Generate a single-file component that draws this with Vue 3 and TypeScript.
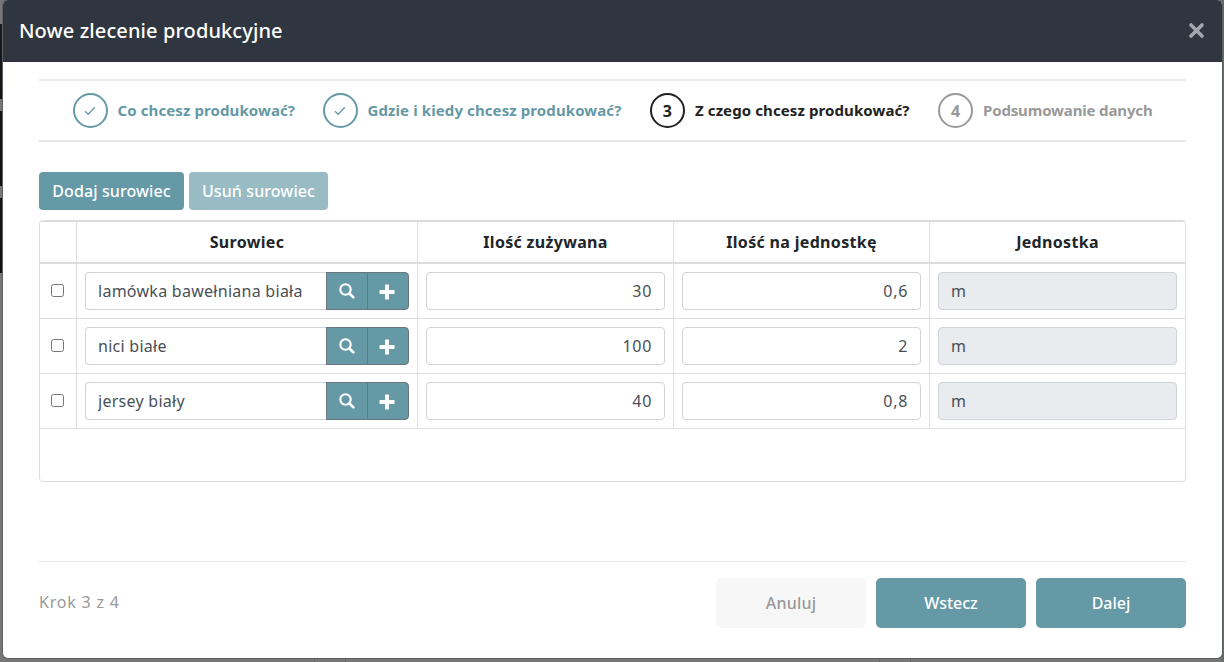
<script setup lang="ts">
import { ref } from 'vue'

interface Step {
  label: string
  state: 'done' | 'active' | 'todo'
}

interface Material {
  name: string
  used: string
  perUnit: string
  unit: string
  selected: boolean
}

const steps: Step[] = [
  { label: 'Co chcesz produkować?', state: 'done' },
  { label: 'Gdzie i kiedy chcesz produkować?', state: 'done' },
  { label: 'Z czego chcesz produkować?', state: 'active' },
  { label: 'Podsumowanie danych', state: 'todo' },
]

const materials = ref<Material[]>([
  { name: 'lamówka bawełniana biała', used: '30', perUnit: '0,6', unit: 'm', selected: false },
  { name: 'nici białe', used: '100', perUnit: '2', unit: 'm', selected: false },
  { name: 'jersey biały', used: '40', perUnit: '0,8', unit: 'm', selected: false },
])
</script>

<template>
  <div class="backdrop">
    <section class="modal">
      <header class="header">
        <h1 class="title">Nowe zlecenie produkcyjne</h1>
        <button class="close" aria-label="Zamknij">
          <svg width="17" height="17" viewBox="0 0 17 17"><path d="M3 3L14 14M14 3L3 14" fill="none" stroke="#a4a7ab" stroke-width="3.6" stroke-linecap="round" /></svg>
        </button>
      </header>

      <div class="body">
        <ol class="steps">
          <li v-for="(step, i) in steps" :key="step.label" class="step" :class="step.state">
            <span class="circle">
              <svg v-if="step.state === 'done'" width="13" height="10" viewBox="0 0 13 10"><path d="M1 5.2L4.2 8.3L10.8 1.2" fill="none" stroke="currentColor" stroke-width="1.3" /></svg>
              <template v-else>{{ i + 1 }}</template>
            </span>
            <span class="label">{{ step.label }}</span>
          </li>
        </ol>

        <div class="toolbar">
          <button class="btn add">Dodaj surowiec</button>
          <button class="btn remove" disabled>Usuń surowiec</button>
        </div>

        <div class="table">
          <div class="row head">
            <div class="cell"></div>
            <div class="cell">Surowiec</div>
            <div class="cell">Ilość zużywana</div>
            <div class="cell">Ilość na jednostkę</div>
            <div class="cell">Jednostka</div>
          </div>
          <div v-for="m in materials" :key="m.name" class="row">
            <div class="cell check"><input v-model="m.selected" type="checkbox" /></div>
            <div class="cell group">
              <input v-model="m.name" class="field name" type="text" />
              <button class="icon-btn" aria-label="Szukaj">
                <svg width="16" height="16" viewBox="0 0 16 16"><circle cx="6.5" cy="6.5" r="5.2" fill="none" stroke="#fff" stroke-width="2.1" /><path d="M10.5 10.5L14.4 14.4" fill="none" stroke="#fff" stroke-width="2.6" stroke-linecap="round" /></svg>
              </button>
              <button class="icon-btn last" aria-label="Dodaj">
                <svg width="16" height="16" viewBox="0 0 16 16"><path d="M6.5 .5h3q.5 0 .5.5v5h5q.5 0 .5.5v3q0 .5-.5.5h-5v5q0 .5-.5.5h-3q-.5 0-.5-.5v-5H1q-.5 0-.5-.5v-3Q.5 6 1 6h5V1q0-.5.5-.5z" fill="#fff" /></svg>
              </button>
            </div>
            <div class="cell"><input v-model="m.used" class="field number" type="text" /></div>
            <div class="cell"><input v-model="m.perUnit" class="field number" type="text" /></div>
            <div class="cell"><input :value="m.unit" class="field unit" type="text" disabled /></div>
          </div>
        </div>

        <footer class="footer">
          <span class="progress">Krok 3 z 4</span>
          <div class="actions">
            <button class="action cancel">Anuluj</button>
            <button class="action back">Wstecz</button>
            <button class="action next">Dalej</button>
          </div>
        </footer>
      </div>
    </section>
  </div>
</template>

<style>
body {
  margin: 0;
  overflow: hidden;
}
</style>

<style scoped>
* {
  box-sizing: border-box;
}
.backdrop {
  height: 662px;
  padding: 0 2px 4px 3px;
  background:
    linear-gradient(#696b6b, #696b6b) right / 2px 100% no-repeat,
    linear-gradient(#777 24px, #171b22 24px, #12161b 99px, #777 99px, #777 111px, #12161b 111px, #0e1116 186px, #777 186px, #777 198px, #12161b 198px, #0e1116 273px, #777 273px) left / 3px 100% no-repeat,
    linear-gradient(90deg, #777 314px, #666 314px, #666 315px, #777 315px, #777 345px, #666 345px, #666 346px, #777 346px, #777 879px, #666 879px, #666 880px, #777 880px, #777 910px, #666 910px, #666 911px, #777 911px);
  font-family: "Noto Sans", "Open Sans", sans-serif;
  font-size: 16px;
}
button,
input {
  font: inherit;
  letter-spacing: inherit;
}
.modal {
  height: 658px;
  overflow: hidden;
  background: #fff;
  border-radius: 5px;
  box-shadow: 0 0 0 1px #5e6060;
}
.header {
  display: flex;
  align-items: center;
  justify-content: space-between;
  height: 62px;
  padding: 0 17px 0 16px;
  background: #303640;
  border-bottom: 1px solid #342f42;
}
.title {
  margin: 0;
  color: #fff;
  font-size: 20px;
  font-weight: 500;
  letter-spacing: .1px;
  white-space: nowrap;
}
.close {
  display: flex;
  padding: 0;
  border: 0;
  background: none;
}
.body {
  padding: 17px 36px 0;
}
.steps {
  display: grid;
  grid-template-columns: 250px 327px 288px 1fr;
  align-items: center;
  height: 63px;
  margin: 0;
  padding: 0 0 0 34px;
  border-top: 2px solid #e9e9e9;
  border-bottom: 2px solid #e9e9e9;
  list-style: none;
}
.step {
  display: flex;
  align-items: center;
  gap: 10px;
  font-size: 15px;
  font-weight: 700;
  letter-spacing: .1px;
  white-space: nowrap;
}
.label {
  padding-bottom: 2px;
}
.done {
  color: #6599a5;
}
.done .label {
  margin-left: -.5px;
}
.active {
  color: #222;
}
.todo {
  color: #999;
  letter-spacing: -.15px;
}
.circle {
  display: flex;
  align-items: center;
  justify-content: center;
  width: 35px;
  height: 35px;
  border: 2px solid currentColor;
  border-radius: 50%;
  font-size: 16px;
}
.toolbar {
  display: flex;
  gap: 5px;
  margin-top: 30px;
}
.btn {
  height: 38px;
  padding: 0;
  border: 0;
  border-radius: 4px;
  background: #6599a5;
  color: #fff;
  font-weight: 500;
  letter-spacing: .1px;
  white-space: nowrap;
}
.add {
  width: 145px;
}
.remove {
  width: 139px;
  background: #99bcc4;
}
.table {
  height: 262px;
  margin-top: 10px;
  border: 1px solid #dcdddf;
  border-radius: 4px;
}
.row {
  display: grid;
  grid-template-columns: 37px 341px 256px 256px 1fr;
  height: 55px;
  border-bottom: 1px solid #dcdde1;
}
.head {
  height: 43px;
  border-top: 1px solid #dcdcdc;
  border-bottom: 2px solid #dcdcdc;
  color: #212529;
  font-weight: 700;
  letter-spacing: .32px;
}
.cell {
  padding: 8px;
  border-right: 1px solid #dcdde1;
}
.cell:last-child {
  border-right: 0;
}
.head .cell {
  display: flex;
  align-items: center;
  justify-content: center;
  padding: 0;
  white-space: nowrap;
}
.check {
  padding: 20px 0 0 11px;
}
.check input {
  display: block;
  width: 13px;
  height: 13px;
  margin: 0;
}
.group {
  display: flex;
}
.field {
  display: block;
  width: 100%;
  min-width: 0;
  height: 38px;
  padding: 0 12px;
  border: 1px solid #ced4da;
  border-radius: 4px;
  background: #fff;
  color: #495057;
}
.name {
  flex: 1;
  border-right: 0;
  border-radius: 4px 0 0 4px;
  letter-spacing: .27px;
}
.number {
  text-align: right;
  letter-spacing: .7px;
}
.unit {
  background: #e9ebef;
}
.icon-btn {
  display: flex;
  align-items: center;
  justify-content: center;
  width: 42px;
  height: 38px;
  padding: 0;
  border: 1px solid #6c757d;
  background: #6599a5;
}
.last {
  margin-left: -1px;
  padding: 1px 2px 0 0;
  border-radius: 0 4px 4px 0;
}
.footer {
  display: flex;
  justify-content: space-between;
  margin-top: 79px;
  padding-top: 16px;
  border-top: 1px solid #e9e9e9;
}
.progress {
  color: #999;
  line-height: 48px;
  letter-spacing: .8px;
}
.actions {
  display: flex;
  gap: 10px;
}
.action {
  width: 150px;
  height: 50px;
  padding: 0;
  border: 0;
  border-radius: 5px;
  background: #6599a5;
  color: #fff;
  font-weight: 500;
}
.cancel {
  background: #f7f7f7;
  color: #999;
  letter-spacing: .2px;
}
</style>
